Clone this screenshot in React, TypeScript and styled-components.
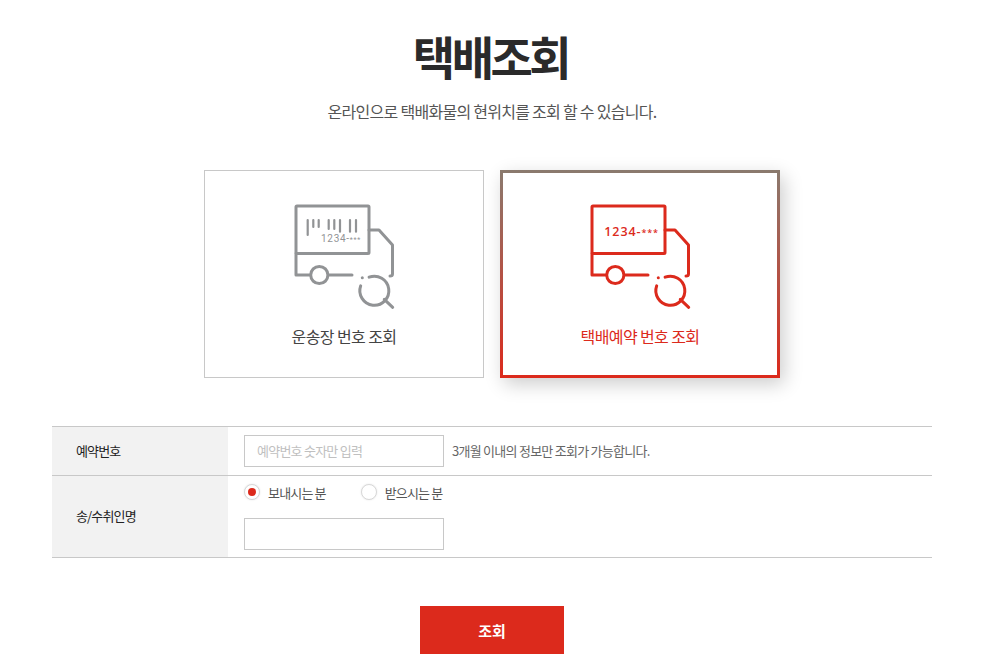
import React from "react";
import styled, { createGlobalStyle } from "styled-components";

const FONT = `"Noto Sans CJK KR", "Noto Sans", sans-serif`;

const Global = createGlobalStyle`
  html, body { margin: 0; padding: 0; background: #fff; }
  body { font-family: ${FONT}; color: #333; overflow: hidden; }
  * { box-sizing: border-box; }
`;

const Page = styled.main`
  width: 986px;
  height: 669px;
  padding: 22px 54px 0 52px;
  display: flex;
  flex-direction: column;
  overflow: hidden;
`;
const Title = styled.h1`
  margin: 0;
  height: 66px;
  padding-right: 3px;
  text-align: center;
  font-size: 46px;
  line-height: 66px;
  font-weight: 700;
  letter-spacing: -3.5px;
  color: #2a2a2a;
`;
const Sub = styled.p`
  margin: 11px 0 0;
  height: 24px;
  text-align: center;
  font-size: 16px;
  line-height: 24px;
  letter-spacing: -0.72px;
  color: #555;
`;
const Cards = styled.div`
  margin-top: 47px;
  display: flex;
  justify-content: center;
  gap: 16px;
`;
const Card = styled.div<{ $active?: boolean }>`
  width: 280px;
  height: 208px;
  padding-top: 29px;
  display: flex;
  flex-direction: column;
  align-items: center;
  background: #fff;
  color: ${(p) => (p.$active ? "#dc2a1c" : "#444")};
  border: ${(p) => (p.$active ? "3px solid transparent" : "1px solid #c8c8c8")};
  ${(p) =>
    p.$active
      ? `background: linear-gradient(#fff, #fff) padding-box, linear-gradient(#8a7a6e, #dc2a1c) border-box;
         box-shadow: 4px 6px 18px rgba(0,0,0,.2); padding-top: 27px;`
      : ""}
`;
const CardLabel = styled.span`
  margin-top: 14px;
  font-size: 16px;
  line-height: 24px;
  letter-spacing: -0.6px;
`;
const Form = styled.section`
  margin-top: 48px;
  width: 880px;
  border-top: 1px solid #c8c8c8;
`;
const Row = styled.div<{ $h: number }>`
  display: flex;
  height: ${(p) => p.$h}px;
  border-bottom: 1px solid #c8c8c8;
`;
const Head = styled.div`
  width: 176px;
  padding: 0 0 2px 24px;
  display: flex;
  align-items: center;
  background: #f2f2f2;
  font-size: 13px;
  letter-spacing: -0.85px;
  color: #222;
`;
const Body = styled.div`
  flex: 1;
  padding-left: 16px;
  display: flex;
  align-items: center;
`;
const StackBody = styled.div`
  flex: 1;
  padding: 4px 0 0 16px;
  display: flex;
  flex-direction: column;
`;
const Field = styled.input`
  width: 200px;
  height: 32px;
  padding: 0 0 2px 12px;
  border: 1px solid #c8c8c8;
  border-radius: 0;
  outline: none;
  background: #fff;
  font: 13px ${FONT};
  letter-spacing: -0.76px;
  &::placeholder { color: #c0c0c0; opacity: 1; }
`;
const Note = styled.span`
  margin: 0 0 2px 8px;
  font-size: 13px;
  letter-spacing: -0.74px;
  color: #666;
`;
const Radios = styled.div`
  display: flex;
  height: 24px;
  margin-bottom: 14px;
  align-items: center;
  gap: 35px;
`;
const RadioLabel = styled.label`
  display: flex;
  align-items: center;
  gap: 8px;
  font-size: 13px;
  letter-spacing: -0.83px;
  color: #555;
`;
const Dot = styled.span<{ $on?: boolean }>`
  width: 16px;
  height: 16px;
  border-radius: 50%;
  border: 1px solid #d8d8d8;
  box-shadow: 0 0 2px rgba(0, 0, 0, 0.1);
  background: #fff;
  display: flex;
  align-items: center;
  justify-content: center;
  &::after {
    content: "";
    width: 8px;
    height: 8px;
    border-radius: 50%;
    background: ${(p) => (p.$on ? "#dc2a1c" : "transparent")};
  }
`;
const Actions = styled.div`
  margin-top: 48px;
  display: flex;
  justify-content: center;
`;
const Submit = styled.button`
  width: 144px;
  height: 48px;
  border: 0;
  background: #dc2a1c;
  color: #fff;
  font: 700 15px ${FONT};
`;

const Truck = ({ color, barcode }: { color: string; barcode?: boolean }) => (
  <svg width="106" height="110" viewBox="0 0 106 110" fill="none" stroke={color} strokeWidth="3" strokeLinecap="round" strokeLinejoin="round">
    <rect x="5" y="6" width="73" height="47.5" rx="1" />
    <path d="M78 30H88L101.5 45V74Q101.5 76 99 76" />
    <path d="M5 53.5V75H19.5" />
    <circle cx="28.3" cy="75" r="8.6" />
    <path d="M38 75H61" />
    <path d="M78.1 77.2A14.5 14.5 0 1 1 69.7 85.8" />
    <path d="M93.3 99.3L101.7 107.3" />
    <circle cx="71.3" cy="77.7" r="1.5" fill={color} stroke="none" />
    {barcode ? (
      <>
        <path
          strokeWidth="2.2"
          d="M16.7 20V35M22.3 20V27M27.7 20V27M37.7 20V29M43.3 20V29M49 20V31.7M59 20V31.7M65 20V31.7"
        />
        <text x="30" y="42.3" fontFamily="Roboto, sans-serif" fontSize="10" letterSpacing="0.7" fill={color} stroke="none">
          1234-<tspan fontSize="7">***</tspan>
        </text>
      </>
    ) : (
      <text x="17.3" y="35.7" fontFamily="'Open Sans', sans-serif" fontSize="12.5" fontWeight="600" letterSpacing="0.9" fill={color} stroke="none">
        1234-<tspan fontSize="9">***</tspan>
      </text>
    )}
  </svg>
);

export default function App() {
  return (
    <Page>
      <Global />
      <Title>택배조회</Title>
      <Sub>온라인으로 택배화물의 현위치를 조회 할 수 있습니다.</Sub>
      <Cards>
        <Card>
          <Truck color="#919395" barcode />
          <CardLabel>운송장 번호 조회</CardLabel>
        </Card>
        <Card $active>
          <Truck color="#dc2a1c" />
          <CardLabel>택배예약 번호 조회</CardLabel>
        </Card>
      </Cards>
      <Form>
        <Row $h={49}>
          <Head>예약번호</Head>
          <Body>
            <Field placeholder="예약번호 숫자만 입력" />
            <Note>3개월 이내의 정보만 조회가 가능합니다.</Note>
          </Body>
        </Row>
        <Row $h={82}>
          <Head>송/수취인명</Head>
          <StackBody>
            <Radios>
              <RadioLabel><Dot $on />보내시는 분</RadioLabel>
              <RadioLabel><Dot />받으시는 분</RadioLabel>
            </Radios>
            <Field />
          </StackBody>
        </Row>
      </Form>
      <Actions>
        <Submit>조회</Submit>
      </Actions>
    </Page>
  );
}
